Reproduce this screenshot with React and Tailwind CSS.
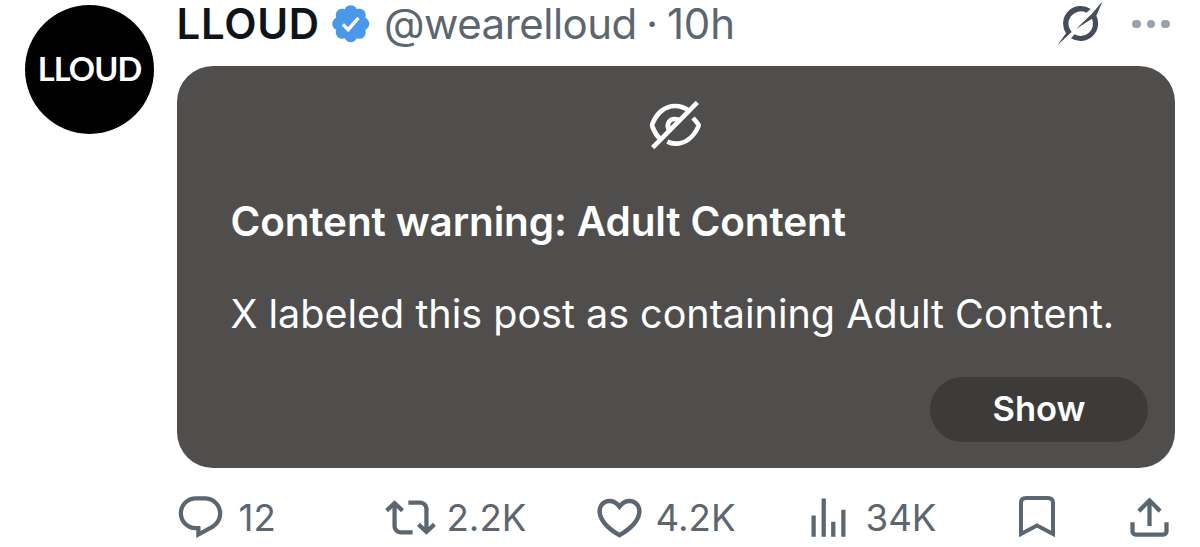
import clsx from 'clsx';

const icons = {
  reply: 'M1.751 10c0-4.42 3.584-8 8.005-8h4.366c4.49 0 8.129 3.64 8.129 8.13 0 2.96-1.607 5.68-4.196 7.11l-8.054 4.46v-3.69h-.067c-4.49.1-8.183-3.51-8.183-8.01zm8.005-6c-3.317 0-6.005 2.69-6.005 6 0 3.37 2.77 6.08 6.138 6.01l.351-.01h1.761v2.3l5.087-2.81c1.951-1.08 3.163-3.13 3.163-5.36 0-3.39-2.744-6.13-6.129-6.13H9.756z',
  repost: 'M4.5 3.88l4.432 4.14-1.364 1.46L5.5 7.55V16c0 1.1.896 2 2 2H13v2H7.5c-2.209 0-4-1.79-4-4V7.55L1.432 9.48.068 8.02 4.5 3.88zM16.5 6H11V4h5.5c2.209 0 4 1.79 4 4v8.45l2.068-1.93 1.364 1.46-4.432 4.14-4.432-4.14 1.364-1.46 2.068 1.93V8c0-1.1-.896-2-2-2z',
  like: 'M16.697 5.5c-1.222-.06-2.679.51-3.89 2.16l-.805 1.09-.806-1.09C9.984 6.01 8.526 5.44 7.304 5.5c-1.243.07-2.349.78-2.91 1.91-.552 1.12-.633 2.78.479 4.82 1.074 1.97 3.257 4.27 7.129 6.61 3.87-2.34 6.052-4.64 7.126-6.61 1.111-2.04 1.03-3.7.477-4.82-.561-1.13-1.666-1.84-2.908-1.91zm4.187 7.69c-1.351 2.48-4.001 5.12-8.379 7.67l-.503.3-.504-.3c-4.379-2.55-7.029-5.19-8.382-7.67-1.36-2.5-1.41-4.86-.514-6.67.887-1.79 2.647-2.91 4.601-3.01 1.651-.09 3.368.56 4.798 2.01 1.429-1.45 3.146-2.1 4.796-2.01 1.954.1 3.714 1.22 4.601 3.01.896 1.81.846 4.17-.514 6.67z',
  views: 'M8.75 21V3h2v18h-2zM18 21V8.3h2V21h-2zM4 21V11h2v10H4zm9.25 0v-7h2v7h-2z',
  share: 'M12 2.59l5.7 5.7-1.41 1.42L13 6.41V16h-2V6.41l-3.3 3.3-1.41-1.42L12 2.59zM21 14.2v4.31c0 1.38-1.12 2.49-2.5 2.49H5.5C4.11 21 3 19.88 3 18.5v-4.3h2v4.3c0 .28.22.5.5.5h13c.28 0 .5-.22.5-.5v-4.3h2z',
};

function Icon({ name, className }) {
  return (
    <svg viewBox="0 0 24 24" fill="currentColor" className={clsx('shrink-0', className)}>
      <path d={icons[name]} />
    </svg>
  );
}

function VerifiedBadge() {
  return (
    <svg viewBox="0 0 22 22" className="size-[43.5px] shrink-0 text-[#4a99e9]" fill="currentColor">
      <path d="M20.396 11c-.018-.646-.215-1.275-.57-1.816-.354-.54-.852-.972-1.438-1.246.223-.607.27-1.264.14-1.897-.131-.634-.437-1.218-.882-1.687-.47-.445-1.053-.75-1.687-.882-.633-.13-1.29-.083-1.897.14-.273-.587-.704-1.086-1.245-1.44S11.647 1.62 11 1.604c-.646.017-1.273.213-1.813.568s-.969.854-1.24 1.44c-.608-.223-1.267-.272-1.902-.14-.635.13-1.22.436-1.69.882-.445.47-.749 1.055-.878 1.688-.13.633-.08 1.29.144 1.896-.587.274-1.087.705-1.443 1.245-.356.54-.555 1.17-.574 1.817.02.647.218 1.276.574 1.817.356.54.856.972 1.443 1.245-.224.606-.274 1.263-.144 1.896.13.634.433 1.218.877 1.688.47.443 1.054.747 1.687.878.633.132 1.29.084 1.897-.136.274.586.705 1.084 1.246 1.439.54.354 1.17.551 1.816.569.647-.016 1.276-.213 1.817-.567s.972-.854 1.245-1.44c.604.239 1.266.296 1.903.164.636-.132 1.22-.447 1.68-.907.46-.46.776-1.044.908-1.681s.075-1.299-.165-1.903c.586-.274 1.084-.705 1.439-1.246.354-.54.551-1.17.569-1.816z" />
      <path d="M7 11.3l2.7 2.7 5.2-6" fill="none" stroke="#fff" strokeWidth="1.7" />
    </svg>
  );
}

function GrokIcon() {
  return (
    <svg viewBox="0 0 138 134" className="h-[44.7px] w-[46px] shrink-0 text-[#454e58]" fill="currentColor">
      <path d="M1 133L27 97A53 53 0 0 1 101 24L88 35A37 37 0 0 0 44 93Z" />
      <path d="M137 1L118 44A53 53 0 0 1 42 112L53 100A37 37 0 0 0 105 53L57 84L104 39Z" />
    </svg>
  );
}

function HiddenIcon() {
  return (
    <svg viewBox="0 0 165 160" className="h-[53.3px] w-[55px]" fill="none" stroke="#fff" strokeWidth="14">
      <path d="M14 149L148 13" />
      <path d="M36 123C25 112 18 99 13 86Q11 82 13 78C25 47 49 24 81 24C97 24 111 29 124 39" />
      <path d="M135 60Q146 72 151 79Q153 82 151 86C136 119 110 137 82 137Q70 137 58 131" />
      <path d="M65 99C53 82 62 63 80 63Q91 63 98 70" />
    </svg>
  );
}

function Action({ icon, count, className, iconClass = 'size-[51px]' }) {
  return (
    <button className={clsx('flex items-center', className)}>
      <Icon name={icon} className={iconClass} />
      <span className="pt-[3px]">{count}</span>
    </button>
  );
}

export default function App() {
  return (
    <article className="flex h-[547px] w-[1200px] bg-white pl-[24.5px] font-[Inter,sans-serif]">
      <div className="mt-[4.5px] mr-[23px] flex size-[129px] shrink-0 items-center justify-center rounded-full bg-black">
        <span className="pl-[1px] font-[Lato,sans-serif] text-[32.5px] leading-none font-bold tracking-[-0.9px] text-white">LLOUD</span>
      </div>
      <div className="w-[998px]">
        <header className="flex h-[47.5px] items-center text-[42px] leading-none whitespace-nowrap">
          <span className="w-[152.5px] font-semibold tracking-[0.7px] text-[#0f1419]">LLOUD</span>
          <VerifiedBadge />
          <span className="ml-[11.5px] text-[#5b6670]">
            <span className="tracking-[-0.5px]">@wearelloud</span>
            <span className="tracking-[-0.2px] [word-spacing:-2.5px]"> · 10h</span>
          </span>
          <div className="ml-auto flex items-center">
            <GrokIcon />
            <div className="mr-[5px] ml-[29.5px] flex gap-[6px]">
              <i className="size-[8.5px] rounded-full bg-[#98a2aa]" />
              <i className="size-[8.5px] rounded-full bg-[#98a2aa]" />
              <i className="size-[8.5px] rounded-full bg-[#98a2aa]" />
            </div>
          </div>
        </header>

        <section className="mt-[18.5px] flex h-[402px] flex-col rounded-[36px] bg-[#4f4e4c] pt-[32px] pr-[26.5px] pb-[26.5px] pl-[54px] text-white">
          <div className="mr-[27.5px] flex justify-center">
            <HiddenIcon />
          </div>
          <h2 className="mt-[46.5px] text-[40.5px] leading-[48px] font-semibold tracking-[-0.14px] whitespace-nowrap">Content warning: Adult Content</h2>
          <p className="mt-[44.5px] text-[39.5px] leading-[48px] whitespace-nowrap">X labeled this post as containing Adult Content.</p>
          <button className="mt-auto h-[65px] w-[218px] self-end rounded-full bg-[#3c3b39] text-[34.5px] font-semibold">Show</button>
        </section>

        <footer className="mt-[23.5px] -ml-[1.5px] flex h-[51px] items-center text-[36.7px] leading-none whitespace-nowrap text-[#5b6670]">
          <Action icon="reply" count="12" className="w-[209.5px] gap-[12.5px]" />
          <Action icon="repost" count="2.2K" className="w-[208px] gap-[11px]" />
          <Action icon="like" count="4.2K" className="w-[210px] gap-[10px]" iconClass="size-[53px]" />
          <Action icon="views" count="34K" className="w-[216.5px] gap-[12px]" />
          <svg viewBox="0 0 36 42" className="h-[42px] w-[36px] shrink-0" fill="none" stroke="currentColor" strokeWidth="4">
            <path d="M2 38V7Q2 2 7 2H29Q34 2 34 7V38L18 29.5Z" />
          </svg>
          <Icon name="share" className="ml-auto size-[51px]" />
        </footer>
      </div>
    </article>
  );
}
